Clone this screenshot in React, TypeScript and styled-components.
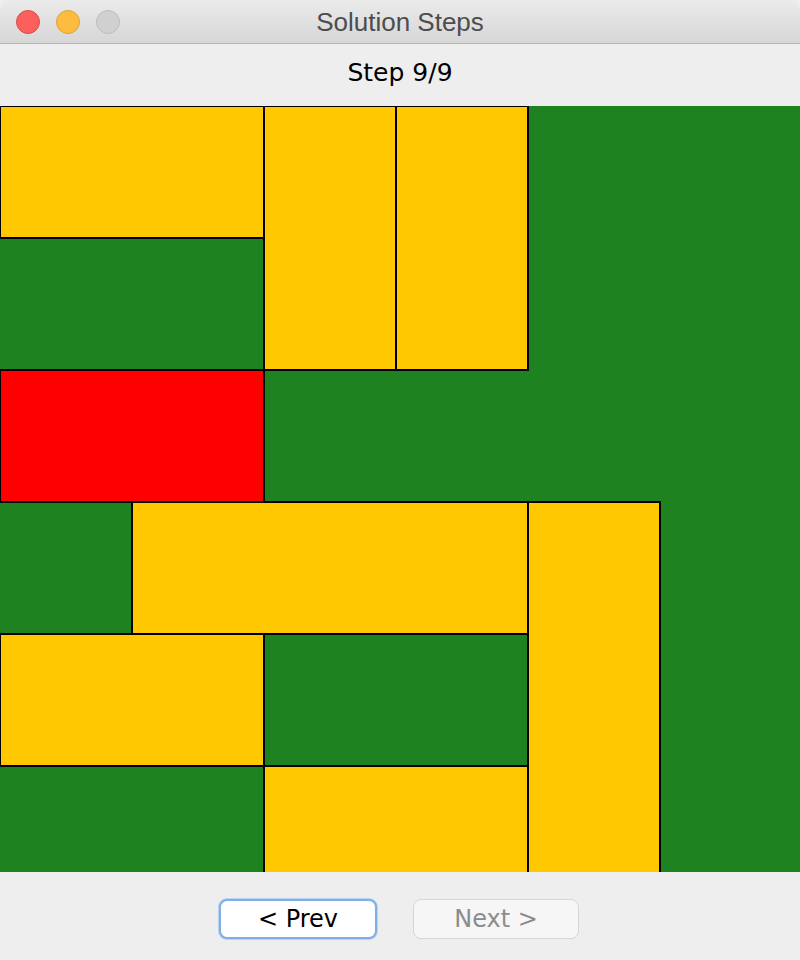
import React from 'react';
import styled, { createGlobalStyle } from 'styled-components';

const GlobalStyle = createGlobalStyle`
  html, body {
    margin: 0;
    padding: 0;
    background: #eeeeee;
  }
`;

const Window = styled.div`
  width: 800px;
  height: 960px;
  display: flex;
  flex-direction: column;
  background: #eeeeee;
  overflow: hidden;
`;

const TitleBar = styled.div`
  position: relative;
  height: 43px;
  flex: none;
  display: flex;
  align-items: center;
  justify-content: center;
  background: linear-gradient(#ebebeb, #d6d6d6);
  border-bottom: 1px solid #b4b4b4;
  border-top-left-radius: 10px;
  border-top-right-radius: 10px;
`;

const Lights = styled.div`
  position: absolute;
  left: 16px;
  top: 10px;
  display: flex;
  gap: 16px;
`;

const Light = styled.span<{ $fill: string; $edge: string }>`
  width: 22px;
  height: 22px;
  border-radius: 50%;
  background: ${(p) => p.$fill};
  border: 1px solid ${(p) => p.$edge};
`;

const Title = styled.div`
  font-family: 'Liberation Sans', Arial, sans-serif;
  font-size: 26px;
  color: #4d4d4d;
  margin-top: 1px;
`;

const StepLabel = styled.div`
  height: 62px;
  box-sizing: border-box;
  padding-bottom: 6px;
  flex: none;
  display: flex;
  align-items: center;
  justify-content: center;
  font-family: 'DejaVu Sans', sans-serif;
  font-size: 25px;
  color: #000;
`;

const Board = styled.div`
  height: 766px;
  flex: none;
  background: #1f8221;
  overflow: hidden;
  display: grid;
  grid-template-columns: repeat(6, 132px);
  grid-template-rows: repeat(6, 132px);
`;

const Piece = styled.div<{ $color: string }>`
  margin: -1px;
  background: ${(p) => p.$color};
  border: 2px solid #000;
`;

const ButtonBar = styled.div`
  flex: 1;
  display: flex;
  justify-content: center;
  align-items: flex-start;
  gap: 36px;
  padding-top: 27px;
  padding-right: 2px;
`;

const NavButton = styled.button<{ $focused?: boolean }>`
  height: 40px;
  box-sizing: border-box;
  padding: 0;
  border-radius: 8px;
  font-family: 'DejaVu Sans', sans-serif;
  font-size: 24px;
  background: ${(p) => (p.$focused ? '#ffffff' : '#f6f6f6')};
  color: ${(p) => (p.$focused ? '#000000' : '#8c8c8c')};
  border: ${(p) => (p.$focused ? '2px solid #80aee9' : '1px solid #d6d6d6')};
  box-shadow: ${(p) => (p.$focused ? '0 0 0 1px #b9d3f3' : 'none')};
`;

const YELLOW = '#ffc800';
const RED = '#ff0000';

const pieces = [
  { c: 1, r: 1, w: 2, h: 1, color: YELLOW },
  { c: 3, r: 1, w: 1, h: 2, color: YELLOW },
  { c: 4, r: 1, w: 1, h: 2, color: YELLOW },
  { c: 1, r: 3, w: 2, h: 1, color: RED },
  { c: 2, r: 4, w: 3, h: 1, color: YELLOW },
  { c: 5, r: 4, w: 1, h: 3, color: YELLOW },
  { c: 1, r: 5, w: 2, h: 1, color: YELLOW },
  { c: 3, r: 6, w: 2, h: 1, color: YELLOW },
];

const App = () => {
  return (
    <>
      <GlobalStyle />
      <Window>
        <TitleBar>
          <Lights>
            <Light $fill="#fc605c" $edge="#de4b46" />
            <Light $fill="#fdbc40" $edge="#dea236" />
            <Light $fill="#d0d0d0" $edge="#bdbdbd" />
          </Lights>
          <Title>Solution Steps</Title>
        </TitleBar>
        <StepLabel>Step 9/9</StepLabel>
        <Board>
          {pieces.map((p, i) => (
            <Piece
              key={i}
              $color={p.color}
              style={{ gridColumn: `${p.c} / span ${p.w}`, gridRow: `${p.r} / span ${p.h}` }}
            />
          ))}
        </Board>
        <ButtonBar>
          <NavButton $focused style={{ width: 158 }}>&lt; Prev</NavButton>
          <NavButton disabled style={{ width: 166 }}>Next &gt;</NavButton>
        </ButtonBar>
      </Window>
    </>
  );
};

export default App;
